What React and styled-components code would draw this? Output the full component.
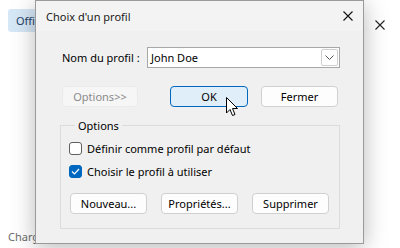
import React from 'react'
import styled, { createGlobalStyle } from 'styled-components'

const GlobalStyle = createGlobalStyle`
  html, body {
    margin: 0;
    padding: 0;
    background: #ffffff;
    font-family: "Noto Sans", "Open Sans", sans-serif;
    font-size: 11px;
    color: #000;
  }
`

const Page = styled.div`
  position: relative;
  width: 400px;
  height: 248px;
  overflow: hidden;
  background: #ffffff;
`

const Backdrop = styled.div`
  display: flex;
  flex-direction: column;
  justify-content: space-between;
  height: 100%;
  padding: 9px 0 4px 8px;
  box-sizing: border-box;
`

const TopRow = styled.div`
  display: flex;
  justify-content: space-between;
  align-items: center;
`

const HostButton = styled.div`
  width: 60px;
  height: 23px;
  line-height: 23px;
  padding-left: 8px;
  box-sizing: border-box;
  background: #d6e7f6;
  border-radius: 3px;
  color: #1f3f66;
  font-size: 11px;
`

const HostClose = styled.div`
  width: 40px;
  display: flex;
  justify-content: center;
  margin-top: 8px;
`

const Status = styled.div`
  color: #6b6b6b;
  font-size: 11px;
`

const Dialog = styled.div`
  position: absolute;
  left: 35px;
  top: 0;
  width: 329px;
  height: 244px;
  box-sizing: border-box;
  border: 1px solid #9a9a9a;
  background: #f0f0f0;
  box-shadow: 0 4px 22px rgba(0, 0, 0, 0.28);
  display: flex;
  flex-direction: column;
`

const TitleBar = styled.div`
  height: 30px;
  flex: none;
  display: flex;
  align-items: center;
  justify-content: space-between;
  background: #f3f3f3;
  padding-left: 10px;
`

const Title = styled.div`
  font-size: 11px;
  color: #1a1a1a;
`

const CloseBtn = styled.div`
  width: 30px;
  height: 30px;
  display: flex;
  align-items: center;
  justify-content: center;
`

const Body = styled.div`
  flex: 1;
  padding: 16px 23px 0 24px;
  display: flex;
  flex-direction: column;
`

const Row = styled.div`
  display: flex;
  align-items: center;
  margin-left: 2px;
  margin-top: ${p => p.$mt || 0}px;
`

const Label = styled.div`
  width: 85px;
  flex: none;
  color: #000;
`

const Combo = styled.div`
  flex: 1;
  height: 21px;
  box-sizing: border-box;
  border: 1px solid #a8a8a8;
  background: #fff;
  display: flex;
  align-items: center;
  justify-content: space-between;
  padding: 0 1px 0 3px;
`

const ComboArrow = styled.div`
  width: 17px;
  height: 17px;
  box-sizing: border-box;
  border: 1px solid #cfcfcf;
  border-radius: 2px;
  display: flex;
  align-items: center;
  justify-content: center;
`

const Button = styled.div`
  width: ${p => p.$w || 77}px;
  height: 21px;
  box-sizing: border-box;
  border-radius: 4px;
  display: flex;
  align-items: center;
  justify-content: center;
  font-size: 11px;
  margin-left: ${p => p.$ml || 0}px;
  background: ${p => (p.$primary ? '#e0eef9' : p.$disabled ? '#f6f6f6' : '#fdfdfd')};
  border: 1px solid ${p => (p.$primary ? '#0067c0' : p.$disabled ? '#ebebeb' : '#d0d0d0')};
  color: ${p => (p.$disabled ? '#8a8a8a' : '#000')};
`

const Group = styled.fieldset`
  margin: 11px 0 0 0;
  padding: 8px 0 14px 8px;
  border: 1px solid #dcdcdc;
  border-radius: 0;
  width: 280px;
  box-sizing: border-box;
  display: flex;
  flex-direction: column;
`

const Legend = styled.legend`
  padding: 0 3px;
  margin-left: 6px;
  font-size: 11px;
  color: #000;
`

const CheckRow = styled.label`
  display: flex;
  align-items: center;
  height: 14px;
  margin-bottom: ${p => p.$mb || 0}px;
  color: #000;
`

const Box = styled.span`
  width: 13px;
  height: 13px;
  box-sizing: border-box;
  border-radius: 3px;
  margin-right: 5px;
  display: flex;
  align-items: center;
  justify-content: center;
  background: ${p => (p.$checked ? '#0067c0' : '#fff')};
  border: 1px solid ${p => (p.$checked ? '#0067c0' : '#5f5f5f')};
`

const ButtonRow = styled.div`
  display: flex;
  margin-top: 15px;
  margin-left: 1px;
`

const Cursor = styled.svg`
  position: absolute;
  left: 226px;
  top: 97px;
`

const XIcon = ({ size = 10, color = '#000' }) => (
  <svg width={size} height={size} viewBox="0 0 10 10">
    <path d="M0.5 0.5 L9.5 9.5 M9.5 0.5 L0.5 9.5" stroke={color} strokeWidth="1.1" fill="none" />
  </svg>
)

export default function App () {
  return (
    <Page>
      <GlobalStyle />
      <Backdrop>
        <TopRow>
          <HostButton>Office</HostButton>
          <HostClose><XIcon size={10} color="#222" /></HostClose>
        </TopRow>
        <Status>Chargement...</Status>
      </Backdrop>

      <Dialog>
        <TitleBar>
          <Title>Choix d'un profil</Title>
          <CloseBtn><XIcon size={10} color="#111" /></CloseBtn>
        </TitleBar>
        <Body>
          <Row>
            <Label>Nom du profil :</Label>
            <Combo>
              <span>John Doe</span>
              <ComboArrow>
                <svg width="9" height="5" viewBox="0 0 9 5">
                  <path d="M0.5 0.5 L4.5 4.5 L8.5 0.5" stroke="#555" fill="none" strokeWidth="1" />
                </svg>
              </ComboArrow>
            </Combo>
          </Row>
          <Row $mt={18}>
            <Button $w={76} $disabled>Options&gt;&gt;</Button>
            <Button $w={78} $ml={32} $primary>OK</Button>
            <Button $w={77} $ml={13}>Fermer</Button>
          </Row>
          <Group>
            <Legend>Options</Legend>
            <CheckRow $mb={9}>
              <Box />
              Définir comme profil par défaut
            </CheckRow>
            <CheckRow>
              <Box $checked>
                <svg width="9" height="7" viewBox="0 0 9 7">
                  <path d="M1 3.5 L3.5 6 L8 1" stroke="#fff" fill="none" strokeWidth="1.2" />
                </svg>
              </Box>
              Choisir le profil à utiliser
            </CheckRow>
            <ButtonRow>
              <Button $w={77}>Nouveau...</Button>
              <Button $w={77} $ml={14}>Propriétés...</Button>
              <Button $w={77} $ml={14}>Supprimer</Button>
            </ButtonRow>
          </Group>
        </Body>
      </Dialog>

      <Cursor width="13" height="20" viewBox="0 0 13 20">
        <path d="M0.5 0.5 L0.5 16 L4 12.5 L6.5 18.5 L9 17.5 L6.5 11.5 L11.5 11.5 Z" fill="#fff" stroke="#000" strokeWidth="1" strokeLinejoin="round" />
      </Cursor>
    </Page>
  )
}
